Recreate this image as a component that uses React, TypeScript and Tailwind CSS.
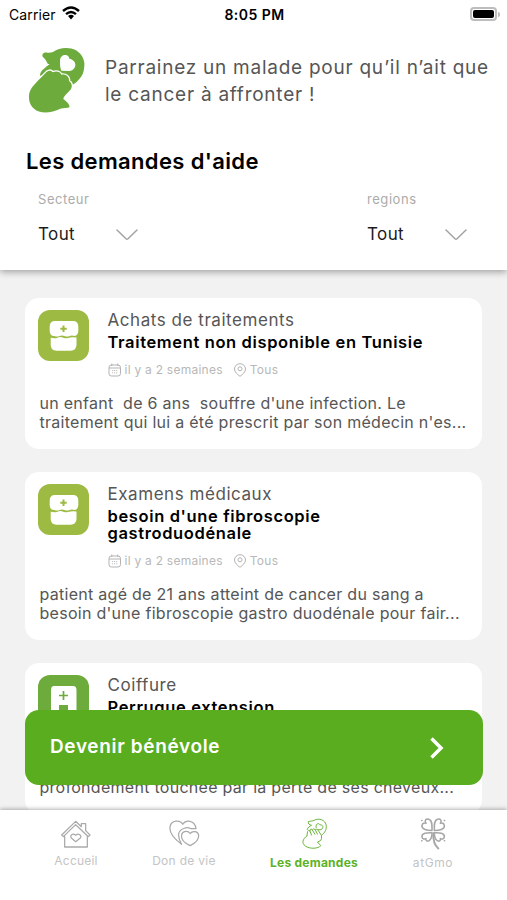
import type { ReactNode } from "react";

type Request = {
  id: number;
  category: string;
  title: ReactNode;
  lines: string[];
  icon: "pill" | "clinic";
};

const requests: Request[] = [
  {
    id: 1,
    category: "Achats de traitements",
    title: "Traitement non disponible en Tunisie",
    lines: [
      "un enfant  de 6 ans  souffre d'une infection. Le",
      "traitement qui lui a été prescrit par son médecin n'es...",
    ],
    icon: "pill",
  },
  {
    id: 2,
    category: "Examens médicaux",
    title: (
      <>
        besoin d'une fibroscopie
        <br />
        gastroduodénale
      </>
    ),
    lines: [
      "patient agé de 21 ans atteint de cancer du sang a",
      "besoin d'une fibroscopie gastro duodénale pour fair...",
    ],
    icon: "pill",
  },
  {
    id: 3,
    category: "Coiffure",
    title: "Perruque extension",
    // first line sits behind the call-to-action button
    lines: ["", "profondement touchée par la perte de ses cheveux..."],
    icon: "clinic",
  },
];

const HandsLogo = () => (
  <svg viewBox="0 0 225 240" className="h-[80px] w-[75px] shrink-0">
    <path
      fill="#6dab3c"
      d="M99 36C118 22 148 20 168 31C188 43 197 65 192 86C190 108 174 124 156 136L136 112L90 104L60 107C60 92 75 84 89 72C78 72 86 66 68 50C65 41 72 36 82 38C88 39 94 38 99 36Z"
    />
    <path fill="#fff" d="M120 62C120 50 129 44 138 45C144 46 147 50 148 56C158 58 167 65 166 76C165 86 157 93 148 93L124 92C120 84 120 72 120 62Z" />
    <path
      fill="#6dab3c"
      stroke="#fff"
      strokeWidth="8"
      strokeLinejoin="round"
      paintOrder="stroke"
      d="M76 100C82 90 93 90 99 97C108 92 121 95 124 104C138 102 148 110 147 123C156 128 159 142 150 151C143 159 130 170 130 177C137 182 147 190 149 200C145 205 131 203 121 206C105 214 85 219 66 217C41 213 26 193 27 171C28 150 34 141 76 100Z"
    />
  </svg>
);

const RequestIcon = ({ kind }: { kind: Request["icon"] }) =>
  kind === "pill" ? (
    <svg viewBox="0 0 51 51" className="size-[51px] shrink-0">
      <rect width="51" height="51" rx="12" fill="#9dbb42" />
      <path fill="#fff" d="M17 11H35Q40.300 11 40.300 16.500V21Q40 25.600 36.500 26Q34 25 31.500 26Q29 27.200 26.500 26Q24 25 21.500 26Q19 27.200 16.500 26Q12 26.500 11.700 21V16.500Q11.700 11 17 11Z" />
      <path fill="#fff" d="M12.700 27.700Q16 28.500 19 28Q21.500 26.600 24 27.300Q27 29 30 28Q33 27 38.500 27.500V35Q38.300 40.700 32.500 40.700H18.500Q12.700 40.700 12.700 35Z" />
      <path stroke="#9dbb42" strokeWidth="2" d="M25.500 15.500V22M22.300 18.700H28.700" />
    </svg>
  ) : (
    <svg viewBox="0 0 51 51" className="size-[51px] shrink-0">
      <rect width="51" height="51" rx="12" fill="#6dab3c" />
      <path fill="#fff" d="M16 11H35Q38.500 11 38.500 15V40H30V30H21V40H13V15Q13 11 16 11Z" />
      <path stroke="#6dab3c" strokeWidth="1.700" d="M25.500 16V25M21 20.500H30" />
    </svg>
  );

const CalendarIcon = () => (
  <svg viewBox="0 0 14 14" fill="none" stroke="#b3b3b3" className="size-[14px]">
    <rect x="1" y="2" width="11.500" height="11" rx="2.500" />
    <path d="M1 5H12.500M3.800 0.500V3M9.800 0.500V3" />
    <path strokeDasharray="1.200 0.800" strokeWidth="0.800" d="M4 7.500H10M4 9.800H10" />
  </svg>
);

const PinIcon = () => (
  <svg viewBox="0 0 14 14" fill="none" stroke="#b3b3b3" className="size-[14px]">
    <path d="M7 13.300C4.500 11.500 1.500 9 1.500 6A5.500 5.300 0 0 1 12.500 6C12.500 9 9.500 11.500 7 13.300Z" />
    <circle cx="7" cy="5.800" r="2" />
  </svg>
);

const Chevron = () => (
  <svg viewBox="0 0 22 12" fill="none" stroke="#a3a3a3" strokeWidth="1.500" strokeLinecap="round" strokeLinejoin="round" className="h-3 w-[22px]">
    <path d="M1 1L10 9.800Q11 10.700 12 9.800L21 1" />
  </svg>
);

const HomeIcon = () => (
  <svg viewBox="94 44 90 84" fill="none" stroke="#aaa" strokeWidth="3.800" strokeLinejoin="round" className="h-7 w-[30px]">
    <path d="M105 92V125H173V92M96 89L138 48L155 64V55H168V76L181 89L176 94L138 58L101 94Z" />
    <path d="M138 109L125 98C119 90 130 82 138 90C146 82 158 90 152 98Z" />
  </svg>
);

const HeartsIcon = () => (
  <svg viewBox="415 44 94 82" fill="none" stroke="#aaa" strokeWidth="3.800" strokeLinejoin="round" className="h-[27px] w-[31px]">
    <path d="M453 118C433 103 415 84 418 65C421 44 449 42 457 57C466 42 493 45 497 70H480C470 64 448 70 444 86C443 98 448 109 453 118Z" />
    <path d="M479 122C464 115 451 103 453 90C456 76 473 76 479 85C487 75 504 78 505 91C506 104 493 115 479 122Z" />
  </svg>
);

const HandsIcon = () => (
  <svg viewBox="15 4 80 94" fill="none" stroke="#6bb33b" strokeWidth="3" strokeLinecap="round" strokeLinejoin="round" className="h-[31px] w-[27px]">
    <path d="M33 39C35 32 40 29 46 26C39 25 35 21 36 15C42 13 49 14 54 11C70 3 86 10 90 24C93 38 87 48 77 56" />
    <path d="M60 33C57 22 67 17 72 25C80 24 83 31 78 37C74 41 70 40 66 39" />
    <path d="M32 58L34 45Q36 39 41 43L46 56M41 43Q41 36 47 38L56 53M49 39Q52 34 57 39L64 53M58 39Q62 35 66 41L76 57Q78 66 74 72L64 77L74 88C66 97 42 99 27 89C16 80 18 69 32 58" />
  </svg>
);

const CloverIcon = () => (
  <svg viewBox="509 36 78 98" fill="none" stroke="#a6a6a6" strokeWidth="4.600" strokeLinecap="round" strokeLinejoin="round" className="h-[33px] w-[26px]">
    <path d="M545 76C531 76 513 73 515 61C516 54 522 52 527 54C521 46 527 40 535 42C547 45 545 62 545 76Z" />
    <path d="M552 76C566 76 584 73 582 61C581 54 575 52 570 54C576 46 570 40 562 42C550 45 552 62 552 76Z" />
    <path d="M545 83C531 82 513 84 515 95C516 102 523 103 527 100C524 107 532 110 537 106C545 101 545 93 545 83Z" />
    <path d="M552 83C566 82 584 84 582 95C581 102 574 103 570 100C573 107 565 110 560 106C553 101 552 93 552 83Z" />
    <path strokeWidth="6" d="M549 84C548 106 554 122 564 130" />
    <path d="M514 46H515M582 46H583M514 107H515M582 107H583" />
  </svg>
);

const StatusBar = () => (
  <div className="flex h-7 items-center justify-between pr-[7px] pl-[9px] text-black">
    <div className="flex w-[150px] items-center gap-[6px] text-[14px]">
      <span className="tracking-[0.1px]">Carrier</span>
      <svg viewBox="0 0 18 14" fill="none" stroke="#000" strokeWidth="2.400" className="-mt-[2px] h-[14px] w-[18px]">
        <path d="M1 5Q9 -2 17 5M4 8.200Q9 3.800 14 8.200" />
        <path fill="#000" stroke="none" d="M6 10Q9 7.500 12 10L9 13.500Z" />
      </svg>
    </div>
    <span className="text-[14px] font-semibold tracking-[0.45px]">8:05 PM</span>
    <div className="flex w-[150px] items-center justify-end">
      <div className="h-[14px] w-[27px] rounded-[4px] border-2 border-[#bdbdbd] p-px">
        <div className="h-full rounded-[2px] bg-black" />
      </div>
      <div className="ml-px h-[5px] w-[2px] rounded-r-full bg-[#bdbdbd]" />
    </div>
  </div>
);

const Filter = ({ label }: { label: string }) => (
  <div className="w-[100px]">
    <p className="text-[13px] leading-4 tracking-[0.55px] text-[#ababab]">{label}</p>
    <div className="mt-[18px] flex h-5 items-center justify-between">
      <span className="text-[17px] tracking-[0.4px] text-[#1c1c1c]">Tout</span>
      <Chevron />
    </div>
  </div>
);

const RequestCard = ({ request }: { request: Request }) => (
  <article className="mb-[22.5px] rounded-[14px] bg-white px-[12.5px] pt-3 pb-4">
    <div className="flex gap-[19px]">
      <RequestIcon kind={request.icon} />
      <div className="-mt-px">
        <p className="text-[17px] leading-[22px] tracking-[0.55px] text-[#565656]">{request.category}</p>
        <h3 className="mt-[3px] text-[16.500px] leading-[17.500px] font-semibold tracking-[0.63px] text-black">{request.title}</h3>
        <div className="mt-[10px] flex h-4 items-center text-[12px] tracking-[0.25px] text-[#b8b8b8]">
          <CalendarIcon />
          <span className="ml-[3px]">il y a 2 semaines</span>
          <span className="ml-[10px]">
            <PinIcon />
          </span>
          <span className="ml-[3px]">Tous</span>
        </div>
      </div>
    </div>
    <div className="mt-4 ml-[2px] text-[16px] leading-[19.750px] tracking-[0.28px] whitespace-pre text-[#565656]">
      {request.lines.map((line, i) => (
        <p key={i} className="h-[19.750px]">
          {line}
        </p>
      ))}
    </div>
  </article>
);

const BottomNav = () => (
  <nav className="relative z-10 flex h-[90px] shrink-0 bg-white pl-[22px] text-[12px] text-[#c4c4c4] shadow-[0_-1px_4px_rgba(0,0,0,0.3)]">
    <div className="flex w-[108px] flex-col items-center pt-[10px]">
      <HomeIcon />
      <span className="mt-[5px] leading-4 tracking-[0.2px]">Accueil</span>
    </div>
    <div className="flex w-[108px] flex-col items-center pt-[10px]">
      <HeartsIcon />
      <span className="mt-[6px] leading-4 tracking-[0.3px]">Don de vie</span>
    </div>
    <div className="flex w-[152px] flex-col items-center pt-2">
      <HandsIcon />
      <span className="mt-[6px] leading-4 font-bold tracking-[0.25px] text-[#5bb226]">Les demandes</span>
    </div>
    <div className="flex w-[86px] flex-col items-center pt-[7px]">
      <CloverIcon />
      <span className="mt-[5px] leading-4 tracking-[0.6px]">atGmo</span>
    </div>
  </nav>
);

const App = () => {
  return (
    <div className="relative flex h-[900px] w-[507px] flex-col overflow-hidden bg-[#f2f2f2] font-['Inter',sans-serif]">
      <header className="relative z-10 h-[270px] shrink-0 bg-white shadow-[0_2px_7px_rgba(0,0,0,0.35)]">
        <StatusBar />
        <div className="mt-3 flex h-[80px] pl-5">
          <HandsLogo />
          <p className="mt-[14px] ml-[10px] text-[19px] leading-[27px] tracking-[0.75px] whitespace-nowrap text-[#565656]">
            Parrainez un malade pour qu’il n’ait que
            <br />
            le cancer à affronter !
          </p>
        </div>
        <h1 className="mt-[27px] ml-[26px] text-[22px] leading-7 font-semibold tracking-[0.35px] text-black">Les demandes d'aide</h1>
        <div className="mt-4 flex justify-between pr-10 pl-[38px]">
          <Filter label="Secteur" />
          <Filter label="regions" />
        </div>
      </header>

      <main className="min-h-0 flex-1 overflow-hidden px-[25px] pt-7">
        {requests.map((request) => (
          <RequestCard key={request.id} request={request} />
        ))}
      </main>

      <BottomNav />

      <button className="absolute top-[710px] left-[25px] z-20 flex h-[75px] w-[458px] items-center justify-between rounded-[14px] bg-[#5aad1e] pr-[39px] pl-[25px] text-[19px] font-semibold tracking-[0.65px] text-white">
        Devenir bénévole
        <svg viewBox="0 0 14 22" fill="none" stroke="#fff" strokeWidth="3.500" className="h-[22px] w-[14px]">
          <path d="M1.500 1.500L11 11L1.500 20.500" />
        </svg>
      </button>
    </div>
  );
};

export default App;
